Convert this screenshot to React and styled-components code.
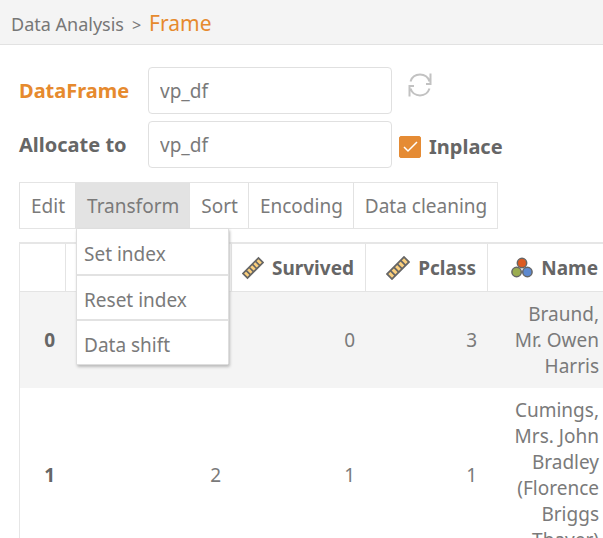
import React, { useState } from "react";
import styled, { createGlobalStyle } from "styled-components";

const GlobalStyle = createGlobalStyle`
  * { box-sizing: border-box; }
  body {
    margin: 0;
    background: #fff;
    color: #7a7a7a;
    font-family: "Noto Sans", "Open Sans", sans-serif;
    font-size: 19px;
  }
  button, input { font: inherit; color: inherit; }
`;

const Page = styled.div`
  display: flex;
  flex-direction: column;
  height: 100vh;
  overflow: hidden;
`;

const Header = styled.header`
  display: flex;
  align-items: baseline;
  gap: 8px;
  flex: none;
  padding: 8px 11px 4px;
  line-height: 30px;
  background: #f4f4f4;
  border-bottom: 1px solid #e2e2e2;
`;

const Crumb = styled.a`
  color: #777;
  font-size: 18px;
  text-decoration: none;
`;

const Separator = styled.span`
  font-size: 16px;
`;

const Title = styled.h1`
  margin: 0;
  color: #e68a2e;
  font-size: 21px;
  font-weight: 400;
  line-height: 30px;
`;

const Main = styled.main`
  display: flex;
  flex: 1;
  flex-direction: column;
  min-height: 0;
  padding: 22px 0 0 19px;
`;

const Form = styled.div`
  display: grid;
  grid-template-columns: 129px 244px auto;
  row-gap: 7px;
  align-items: center;
`;

const Label = styled.label`
  color: ${(p) => (p.$required ? "#e68a2e" : "#666")};
  font-size: 20px;
  font-weight: 700;
  line-height: 26px;
`;

const TextField = styled.input`
  width: 100%;
  height: 47px;
  padding: 0 11px;
  border: 1px solid #e0e0e0;
  border-radius: 4px;
  background: #fff;
  outline: none;
`;

const RefreshButton = styled.button`
  align-self: start;
  justify-self: start;
  display: flex;
  margin: 5px 0 0 15px;
  padding: 0;
  border: 0;
  background: none;
`;

const CheckLabel = styled.label`
  display: flex;
  align-items: center;
  gap: 8px;
  padding: 4px 0 0 7px;
  color: #666;
  font-size: 20px;
  font-weight: 700;
`;

const Checkbox = styled.input`
  appearance: none;
  width: 22px;
  height: 22px;
  margin: 0;
  border: 1px solid #e0e0e0;
  border-radius: 2px;
  background: #fff;

  &:checked {
    border-color: #e58b34;
    background: #e58b34 url("data:image/svg+xml,%3Csvg xmlns='http://www.w3.org/2000/svg' viewBox='0 0 20 20'%3E%3Cpath d='M4 10l4 4 9-9' fill='none' stroke='white' stroke-width='1.500'/%3E%3C/svg%3E") center / 100% no-repeat;
  }
`;

const Toolbar = styled.div`
  display: flex;
  flex: none;
  align-self: flex-start;
  margin-top: 14px;
  border: solid #e4e4e4;
  border-width: 1px 1px 1px 0;
`;

const ToolItem = styled.div`
  position: relative;
`;

const ToolButton = styled.button`
  height: 45px;
  padding: 0 10px 0 11px;
  border: 0;
  border-left: 1px solid #e2e2e2;
  background: ${(p) => (p.$active ? "#e3e3e3" : "#fff")};
  white-space: nowrap;
`;

const Menu = styled.div`
  position: absolute;
  top: 100%;
  left: 1px;
  z-index: 1;
  width: 153px;
  border: 1px solid #dedede;
  border-radius: 2px;
  background: #fff;
  box-shadow: 1px 2px 3px #bbb;
`;

const MenuItem = styled.button`
  display: block;
  width: 100%;
  height: 45px;
  padding: 4px 7px 0;
  border: 0;
  background: #fff;
  text-align: left;

  & + & { border-top: 2px solid #e2e2e2; }
`;

const TableFrame = styled.div`
  flex: 1;
  min-height: 0;
  margin-top: 13px;
  overflow: hidden;
  border: solid #e6e6e6;
  border-width: 2px 0 0 1px;
`;

const Table = styled.table`
  width: 590px;
  table-layout: fixed;
  border-collapse: separate;
  border-spacing: 0;
  text-align: right;
`;

const Column = styled.col`
  width: ${(p) => p.$width}px;
`;

const HeadCell = styled.th`
  height: 48px;
  padding: 0 11px 0 10px;
  border: solid #e4e4e4;
  border-width: 0 1px 1px 0;
  color: #666;
`;

const HeadContent = styled.span`
  display: flex;
  align-items: center;
  justify-content: flex-end;
  gap: 8px;
`;

const BodyRow = styled.tr`
  &:nth-child(odd) { background: #f4f4f4; }
`;

const RowHead = styled.th`
  padding: 9px 11px;
  color: #666;
`;

const Cell = styled.td`
  padding: 9px 11px 9px 10px;
  line-height: 26px;
`;

function RefreshIcon() {
  return (
    <svg width="26" height="26" viewBox="0 0 26 26" fill="none" stroke="#c2c2c2" strokeWidth="2" aria-hidden="true">
      <path d="M3.500 9.500A10 10 0 0 1 22.500 9.500M23.500 1.500v10.500h-4.500M22.500 16.500A10 10 0 0 1 3.500 16.500M2.500 24.500V14h4.500" />
    </svg>
  );
}

function RulerIcon() {
  return (
    <svg width="24" height="24" viewBox="0 0 24 24" aria-hidden="true">
      <g transform="rotate(-45 12 12)" fill="#fbcf7c" stroke="#666" strokeWidth="1.800">
        <rect x="0" y="8.500" width="24" height="7" />
        <path d="M4.800 8.500v7M9.600 8.500v7M14.400 8.500v7M19.200 8.500v7" />
      </g>
    </svg>
  );
}

function CategoryIcon() {
  return (
    <svg width="22" height="22" viewBox="0 0 22 22" stroke="#666" strokeWidth="1.500" aria-hidden="true">
      <circle cx="11" cy="6" r="4.700" fill="#dc5b21" />
      <circle cx="5.600" cy="15" r="4.700" fill="#9bad50" />
      <circle cx="16.400" cy="15" r="4.700" fill="#5d89cf" />
    </svg>
  );
}

const tools = ["Edit", "Transform", "Sort", "Encoding", "Data cleaning"];
const menuItems = ["Set index", "Reset index", "Data shift"];
const columnWidths = [46, 166, 134, 122, 122];
const rows = [
  ["1", "0", "3", "Braund, Mr. Owen Harris"],
  ["2", "1", "1", "Cumings, Mrs. John Bradley (Florence Briggs Thayer)"],
];

export default function App() {
  const [openTool, setOpenTool] = useState("Transform");
  return (
    <Page>
      <GlobalStyle />
      <Header>
        <Crumb href="#">Data Analysis</Crumb>
        <Separator>&gt;</Separator>
        <Title>Frame</Title>
      </Header>
      <Main>
        <Form>
          <Label $required htmlFor="dataframe">DataFrame</Label>
          <TextField id="dataframe" defaultValue="vp_df" />
          <RefreshButton aria-label="Refresh"><RefreshIcon /></RefreshButton>
          <Label htmlFor="allocate">Allocate to</Label>
          <TextField id="allocate" defaultValue="vp_df" />
          <CheckLabel>
            <Checkbox type="checkbox" defaultChecked />
            Inplace
          </CheckLabel>
        </Form>
        <Toolbar>
          {tools.map((tool) => (
            <ToolItem key={tool}>
              <ToolButton
                $active={tool === openTool}
                onClick={() => setOpenTool(tool === openTool ? null : tool)}
              >
                {tool}
              </ToolButton>
              {tool === "Transform" && openTool === tool && (
                <Menu>
                  {menuItems.map((item) => <MenuItem key={item}>{item}</MenuItem>)}
                </Menu>
              )}
            </ToolItem>
          ))}
        </Toolbar>
        <TableFrame>
          <Table>
            <colgroup>
              {columnWidths.map((width, i) => <Column key={i} $width={width} />)}
            </colgroup>
            <thead>
              <tr>
                <HeadCell />
                <HeadCell />
                <HeadCell><HeadContent><RulerIcon />Survived</HeadContent></HeadCell>
                <HeadCell><HeadContent><RulerIcon />Pclass</HeadContent></HeadCell>
                <HeadCell><HeadContent><CategoryIcon />Name</HeadContent></HeadCell>
              </tr>
            </thead>
            <tbody>
              {rows.map((row, index) => (
                <BodyRow key={index}>
                  <RowHead scope="row">{index}</RowHead>
                  {row.map((value, i) => <Cell key={i}>{value}</Cell>)}
                </BodyRow>
              ))}
            </tbody>
          </Table>
        </TableFrame>
      </Main>
    </Page>
  );
}
